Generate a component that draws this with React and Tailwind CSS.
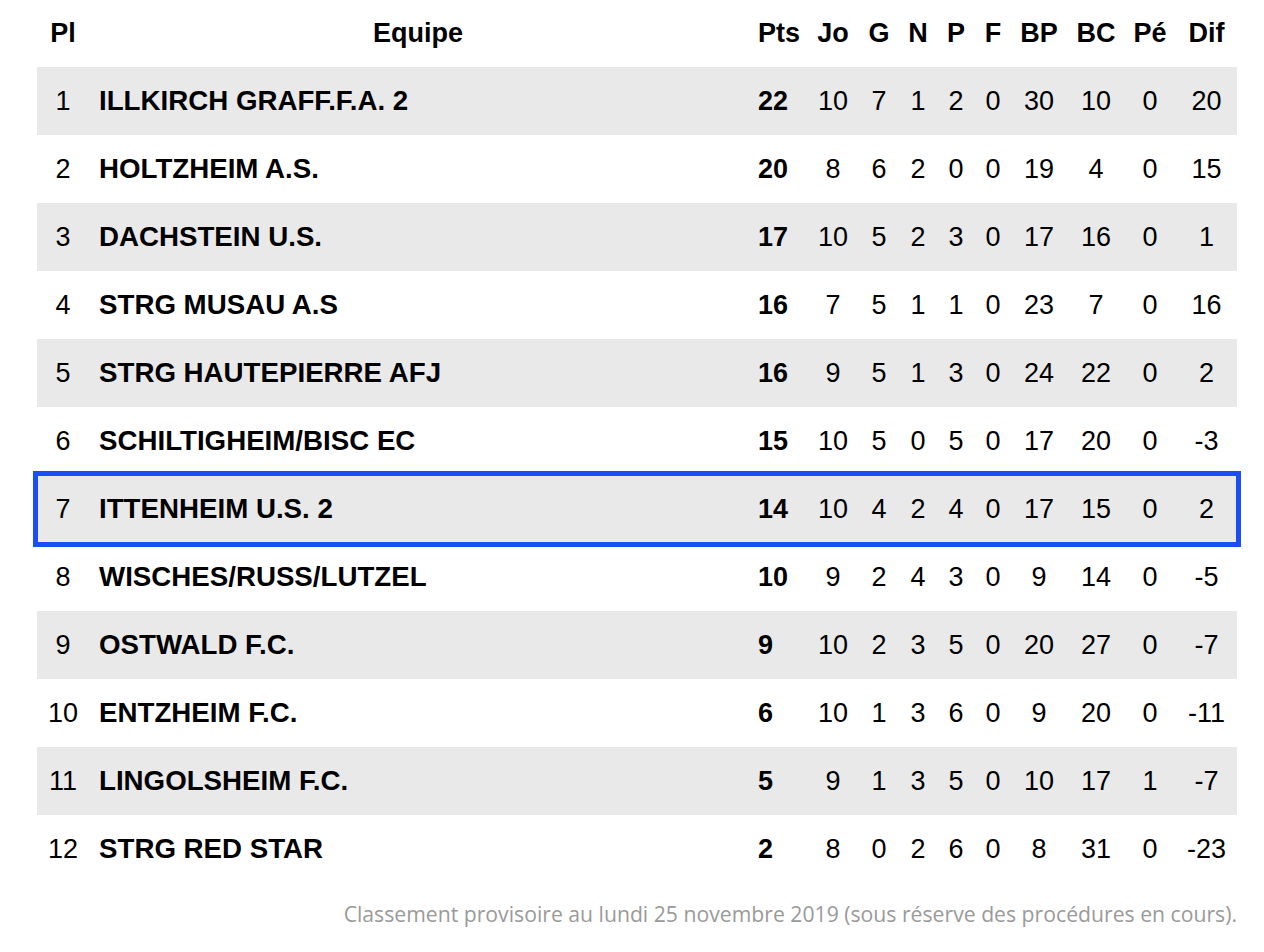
import React from 'react'

const rows = [
  [1, 'ILLKIRCH GRAFF.F.A. 2', 22, 10, 7, 1, 2, 0, 30, 10, 0, 20],
  [2, 'HOLTZHEIM A.S.', 20, 8, 6, 2, 0, 0, 19, 4, 0, 15],
  [3, 'DACHSTEIN U.S.', 17, 10, 5, 2, 3, 0, 17, 16, 0, 1],
  [4, 'STRG MUSAU A.S', 16, 7, 5, 1, 1, 0, 23, 7, 0, 16],
  [5, 'STRG HAUTEPIERRE AFJ', 16, 9, 5, 1, 3, 0, 24, 22, 0, 2],
  [6, 'SCHILTIGHEIM/BISC EC', 15, 10, 5, 0, 5, 0, 17, 20, 0, -3],
  [7, 'ITTENHEIM U.S. 2', 14, 10, 4, 2, 4, 0, 17, 15, 0, 2],
  [8, 'WISCHES/RUSS/LUTZEL', 10, 9, 2, 4, 3, 0, 9, 14, 0, -5],
  [9, 'OSTWALD F.C.', 9, 10, 2, 3, 5, 0, 20, 27, 0, -7],
  [10, 'ENTZHEIM F.C.', 6, 10, 1, 3, 6, 0, 9, 20, 0, -11],
  [11, 'LINGOLSHEIM F.C.', 5, 9, 1, 3, 5, 0, 10, 17, 1, -7],
  [12, 'STRG RED STAR', 2, 8, 0, 2, 6, 0, 8, 31, 0, -23],
]

const stats = ['Jo', 'G', 'N', 'P', 'F', 'BP', 'BC', 'Pé', 'Dif']
const statWidths = ['w-[50px]', 'w-[42px]', 'w-[36px]', 'w-[40px]', 'w-[34px]', 'w-[58px]', 'w-[56px]', 'w-[52px]', 'w-[61px]']

export default function App() {
  return (
    <div className="w-[1264px] h-[952px] bg-white text-black font-['Liberation_Sans',Arial,sans-serif]">
      <div className="pl-[37px] w-[1237px]">
        <table className="w-[1200px] table-fixed border-collapse text-[27px]">
          <colgroup>
            <col className="w-[52px]" />
            <col className="w-[658px]" />
            <col className="w-[61px]" />
            {statWidths.map((w, i) => (
              <col key={i} className={w} />
            ))}
          </colgroup>
          <thead>
            <tr className="h-[67px] font-bold">
              <th className="text-center p-0">Pl</th>
              <th className="text-center p-0">Equipe</th>
              <th className="text-left pl-[11px]">Pts</th>
              {stats.map((s) => (
                <th key={s} className="text-center p-0">{s}</th>
              ))}
            </tr>
          </thead>
          <tbody>
            {rows.map((r, i) => {
              const [pl, team, pts, ...rest] = r
              const gray = i % 2 === 0
              const mine = pl === 7
              return (
                <tr
                  key={pl}
                  className={
                    'h-[68px] ' +
                    (gray || mine ? 'bg-[#e9e9e9] ' : 'bg-white ') +
                    (mine ? 'outline-[5px] outline-solid outline-[#1a4ef7] -outline-offset-1' : '')
                  }
                >
                  <td className="text-center p-0">{pl}</td>
                  <td className="pl-[10px] font-bold whitespace-nowrap text-[27.7px]">{team}</td>
                  <td className="pl-[11px] font-bold">{pts}</td>
                  {rest.map((v, j) => (
                    <td key={j} className="text-center p-0">{v}</td>
                  ))}
                </tr>
              )
            })}
          </tbody>
        </table>
        <p className="mt-[15px] text-right text-[21.2px] text-[#9a9a9a] font-['Open_Sans',sans-serif]">
          Classement provisoire au lundi 25 novembre 2019 (sous réserve des procédures en cours).
        </p>
      </div>
    </div>
  )
}
